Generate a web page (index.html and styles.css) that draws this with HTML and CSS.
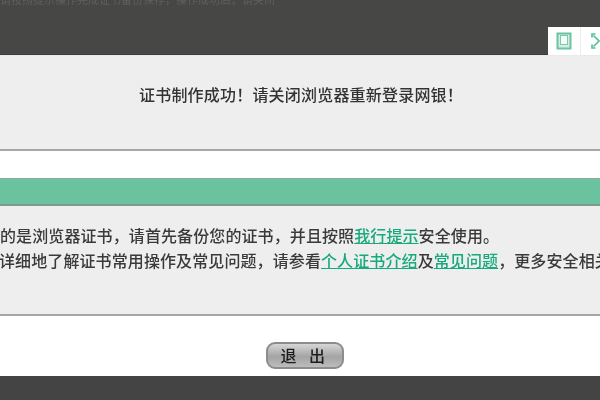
FILE: index.html
```html
<!DOCTYPE html>
<html lang="zh-CN">
<head>
<meta charset="utf-8">
<title>证书制作成功</title>
<link rel="stylesheet" href="styles.css">
</head>
<body>
<div class="page">
  <header class="top">
    <div class="top-note">请按照提示操作完成证书备份保存，操作成功后，请关闭</div>
    <div class="tools">
      <div class="tool tool-a">
        <svg width="16" height="18" viewBox="0 0 16 18"><rect x="1.500" y="1.500" width="13" height="15" fill="#d3eee3" stroke="#6cc3a0" stroke-width="2"/><rect x="4.500" y="3.500" width="7" height="9" fill="#f4fbf8" stroke="#7ccbab"/></svg>
      </div>
      <div class="tool tool-b">
        <svg width="16" height="16" viewBox="0 0 16 16" fill="none" stroke="#58c09a" stroke-width="1.700"><path d="M2.500 2.500L8 8l-5.500 5.500"/><path d="M1 4.500V1h3.500M1 11.500V15h3.500"/></svg>
      </div>
    </div>
  </header>
  <section class="message">
    <p class="title">证书制作成功！请关闭浏览器重新登录网银！</p>
  </section>
  <div class="spacer"></div>
  <div class="bar"></div>
  <section class="info">
    <p class="line line-one">的是浏览器证书，请首先备份您的证书，并且按照<a href="#">我行提示</a>安全使用。</p>
    <p class="line line-two">详细地了解证书常用操作及常见问题，请参看<a href="#">个人证书介绍</a>及<a href="#">常见问题</a>，更多安全相关信息请查看</p>
  </section>
  <section class="actions">
    <button class="exit" type="button">退&nbsp;出</button>
  </section>
  <footer class="bottom"></footer>
</div>
</body>
</html>
```
FILE: styles.css
```css
* { box-sizing: border-box; }
html, body { margin: 0; padding: 0; }
body { width: 600px; height: 400px; overflow: hidden; background: #444; font-family: "Noto Sans CJK SC", "Liberation Sans", sans-serif; }
.page { width: 600px; height: 400px; display: flex; flex-direction: column; overflow: hidden; }
p { margin: 0; }

.top { height: 56px; background: #474746; border-bottom: 1px solid #e9e9e9; display: flex; flex-direction: column; align-items: stretch; position: relative; box-shadow: inset 0 -1px 0 #3e3e3e; }
.top-note { height: 27px; margin-top: -9px; font-size: 11px; line-height: 16px; color: #5f5f5c; white-space: nowrap; filter: blur(0.7px); }
.tools { align-self: flex-end; display: flex; height: 28px; margin-top: 9px; background: #fff; }
.tool { height: 28px; display: flex; align-items: center; justify-content: center; }
.tool-a { width: 33px; border-right: 1px solid #ececec; }
.tool-b { width: 19px; justify-content: flex-start; padding-left: 10px; overflow: hidden; }
.tool-b svg { flex: none; }

.message { height: 95px; background: #eeeeee; border-bottom: 2px solid #a6a6a6; display: flex; align-items: center; justify-content: center; padding: 0 0 18px 2px; }
.title { font-size: 16px; line-height: 24px; font-weight: 500; letter-spacing: 0.200px; color: #333; filter: blur(0.35px); }

.spacer { height: 27px; background: #fff; }
.bar { height: 28px; background: #6bc29e; border-top: 1px solid #8fa99c; border-bottom: 2px solid #7d9a8d; }

.info { height: 110px; background: #eeeeee; border-bottom: 2px solid #a6a6a6; padding-top: 17px; }
.line { font-size: 16px; line-height: 25px; font-weight: 500; letter-spacing: 0.100px; color: #3a3a3a; white-space: nowrap; filter: blur(0.35px); }
.line-one { margin-left: 0; }
.line-two { margin-left: -1px; }
.line a { color: #18a97c; text-decoration: underline; }

.actions { height: 60px; background: #fff; display: flex; align-items: flex-start; justify-content: center; padding: 26px 0 0 10px; }
.exit { width: 78px; height: 27px; padding: 0; border: 2px solid #8c8c8c; border-radius: 9px; background: linear-gradient(#d6d6d6, #a4a4a4 55%, #bcbcbc); font-family: "Noto Sans CJK SC", sans-serif; font-size: 16px; font-weight: 500; line-height: 21px; letter-spacing: 4.500px; color: #1c1c1c; filter: blur(0.3px); }

.bottom { flex: 1; background: #444; }
```
